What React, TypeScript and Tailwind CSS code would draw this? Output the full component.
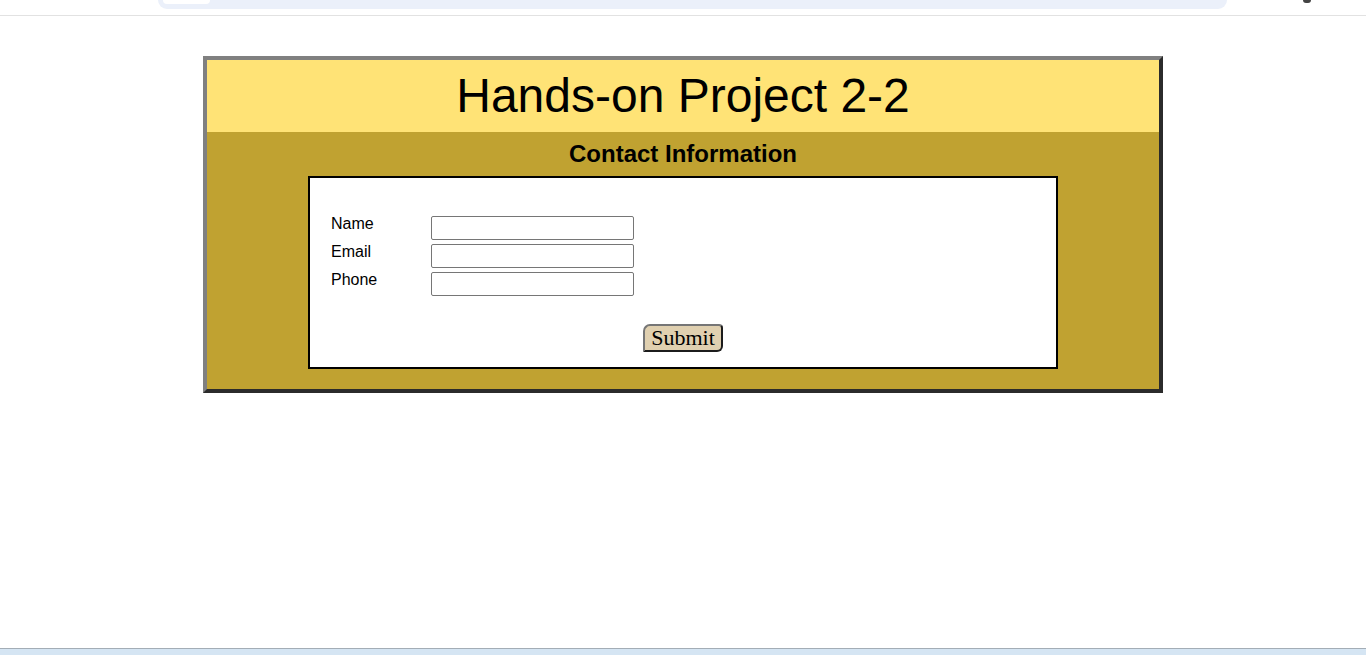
import React from "react";

const fields = ["Name", "Email", "Phone"];

const App = () => {
  return (
    <div className="h-[655px] flex flex-col bg-white overflow-hidden font-['Liberation_Sans',Arial,sans-serif] text-black">
      {/* browser chrome remnant */}
      <div className="h-[16px] shrink-0 border-b border-[#e2e2e2] flex items-start">
        <div className="ml-[158px] w-[1069px] h-[9px] bg-[#ebf0fa] rounded-b-[10px] flex items-start">
          <div className="ml-[5px] w-[47px] h-[4px] bg-white rounded-b-[4px]" />
        </div>
        <div className="ml-[76px] w-[8px] h-[3px] bg-[#444] rounded-b-full" />
      </div>

      <div className="mt-[40px] mx-auto w-[960px] border-4 border-t-[#808080] border-l-[#808080] border-r-[#2b2b2b] border-b-[#2b2b2b]">
        <div className="h-[72px] bg-[#ffe376] flex items-center justify-center">
          <h1 className="text-[48px] leading-none font-normal">Hands-on Project 2-2</h1>
        </div>
        <div className="bg-[#c0a231] pb-[20px]">
          <h2 className="h-[44px] flex items-center justify-center text-[24px] font-bold">
            Contact Information
          </h2>
          <div className="mx-auto w-[750px] bg-white border-2 border-black pt-[38px] pb-[15px]">
            <div className="flex flex-col gap-[4px]">
              {fields.map((f) => (
                <div key={f} className="flex items-start h-[24px]">
                  <label className="w-[121px] pl-[21px] text-[16px] leading-[18px] -mt-[1px]">{f}</label>
                  <input
                    type="text"
                    className="w-[203px] h-[24px] border border-[#767676] rounded-[2px] bg-white"
                  />
                </div>
              ))}
            </div>
            <div className="mt-[28px] flex justify-center">
              <button className="w-[80px] h-[28px] bg-[#e0d0b0] border-2 border-t-[#767676] border-l-[#767676] border-r-[#1c1c1c] border-b-[#1c1c1c] rounded-tl-[7px] rounded-tr-[4px] rounded-br-[6px] font-['Liberation_Serif','Times_New_Roman',serif] text-[22px] leading-none flex items-center justify-center">
                Submit
              </button>
            </div>
          </div>
        </div>
      </div>

      <div className="mt-auto h-[7px] shrink-0 border-t border-[#a3adb6] bg-[#d5e5f3]" />
    </div>
  );
};

export default App;
